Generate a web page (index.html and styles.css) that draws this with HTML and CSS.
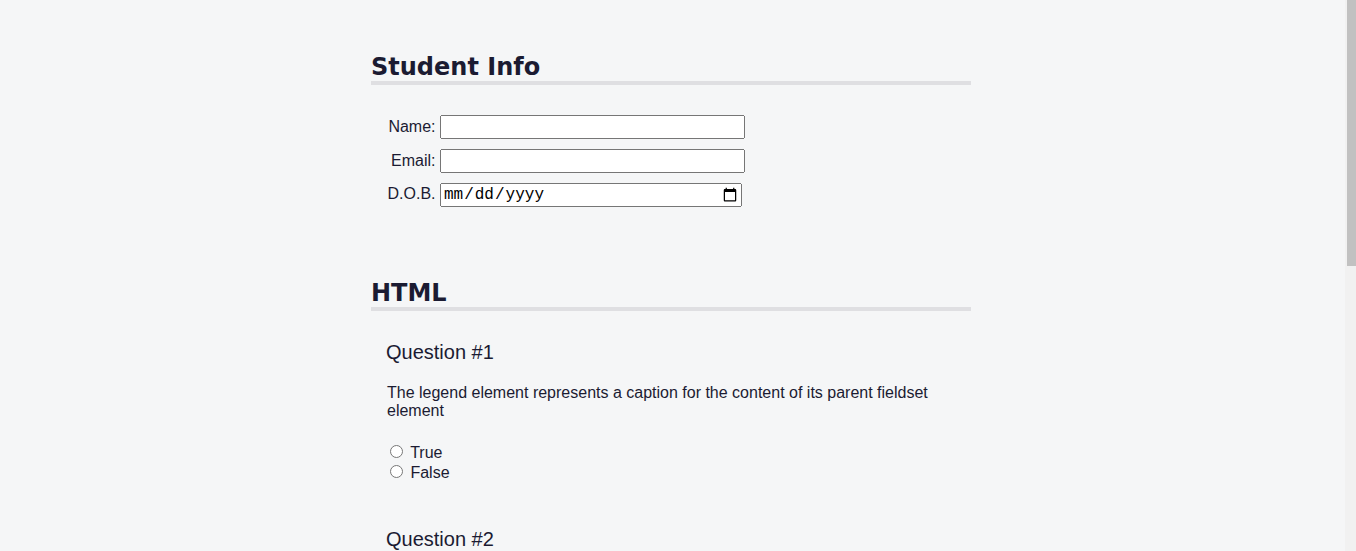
FILE: index.html
```html
<!DOCTYPE html>
<html lang="en">
<head>
<meta charset="utf-8">
<title>Accessibility Quiz</title>
<link rel="stylesheet" href="styles.css">
</head>
<body>
<main class="main">
  <form class="quiz" method="post" action="#">
    <section class="section section-first" aria-labelledby="student-info">
      <h2 class="section-title" id="student-info">Student Info</h2>
      <div class="info">
        <label class="info-label" for="student-name">Name:</label>
        <input class="info-input" type="text" name="student-name" id="student-name">
      </div>
      <div class="info">
        <label class="info-label" for="student-email">Email:</label>
        <input class="info-input" type="email" name="student-email" id="student-email">
      </div>
      <div class="info">
        <label class="info-label" for="birth-date">D.O.B.</label>
        <input class="info-input info-date" type="date" name="birth-date" id="birth-date">
      </div>
    </section>

    <section class="section" aria-labelledby="html-questions">
      <h2 class="section-title" id="html-questions">HTML</h2>
      <div class="question-block">
        <p class="question-number">Question #1</p>
        <fieldset class="question" name="html-question-one">
          <legend class="question-text">The legend element represents a caption for the content of its parent fieldset element</legend>
          <ul class="answers-list">
            <li><label for="q1-a"><input class="radio" type="radio" id="q1-a" name="q1" value="true"> True</label></li>
            <li><label for="q1-b"><input class="radio" type="radio" id="q1-b" name="q1" value="false"> False</label></li>
          </ul>
        </fieldset>
      </div>
      <div class="question-block">
        <p class="question-number">Question #2</p>
        <fieldset class="question" name="html-question-two">
          <legend class="question-text">A label element nesting an input element is required to have a for attribute with the same value as the input's id</legend>
          <ul class="answers-list">
            <li><label for="q2-a"><input class="radio" type="radio" id="q2-a" name="q2" value="true"> True</label></li>
            <li><label for="q2-b"><input class="radio" type="radio" id="q2-b" name="q2" value="false"> False</label></li>
          </ul>
        </fieldset>
      </div>
    </section>
  </form>
</main>
<div class="scrollbar" aria-hidden="true">
  <div class="scrollbar-track">
    <div class="scrollbar-thumb"></div>
  </div>
</div>
</body>
</html>
```
FILE: styles.css
```css
html {
  overflow: hidden;
}

body {
  background: #f5f6f7;
  color: #1b1b32;
  font-family: "Liberation Sans", Helvetica, Arial, sans-serif;
  margin: 0;
  padding-right: 14px;
}

.scrollbar {
  position: fixed;
  top: 0;
  right: 0;
  width: 14px;
  height: 100vh;
  display: flex;
  justify-content: flex-end;
}

.scrollbar-track {
  width: 11px;
  height: 100%;
  background: #f1f1f1;
  display: flex;
  justify-content: flex-end;
}

.scrollbar-thumb {
  width: 9px;
  height: 266px;
  background: #c1c1c1;
}

.main {
  padding-top: 0;
}

.section {
  width: 80%;
  margin: 0 auto 10px auto;
  max-width: 600px;
}

.section-title {
  font-family: "DejaVu Sans", Verdana, Tahoma, sans-serif;
  font-size: 24px;
  line-height: 28px;
  border-bottom: 4px solid #dfdfe2;
  margin-top: 0;
  margin-bottom: 19.92px;
  padding-top: 62px;
}

.section-first .section-title {
  padding-top: 53px;
}

.info {
  padding: 10px 0 0 5px;
}

input {
  font-size: 16px;
}

.info-label,
.info-input {
  display: inline-block;
}

.info-input {
  width: 50%;
  text-align: left;
  font-family: "Liberation Sans", Arial, sans-serif;
}

.info-date {
  font-family: "Liberation Mono", monospace;
}

.info-label {
  width: 10%;
  min-width: 55px;
  text-align: right;
}

.question-block {
  text-align: left;
  display: block;
  width: 100%;
  margin-top: 20px;
  padding-top: 5px;
}

.question-number {
  margin-top: 5px;
  margin-bottom: 20px;
  padding-left: 15px;
  font-size: 20px;
}

.question {
  border: none;
  padding-bottom: 0;
}

.question-text {
  font-size: 16px;
}

.answers-list {
  list-style: none;
  padding: 0;
}

.radio {
  margin: 3px 3px 0 5px;
}
```
